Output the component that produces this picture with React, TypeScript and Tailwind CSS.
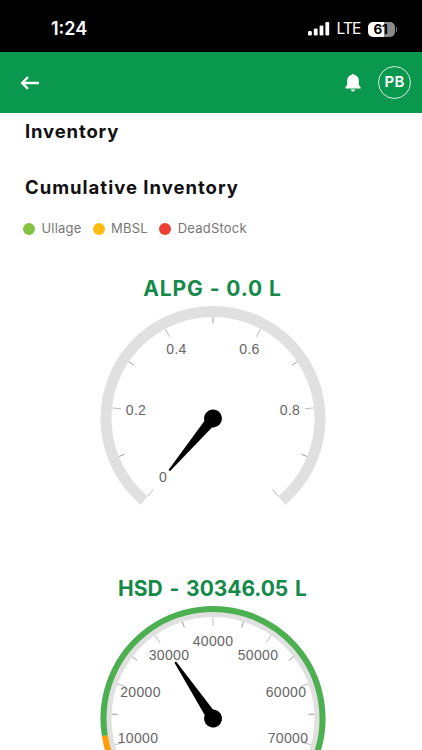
const CX = 113;
const CY = 113;
const START = 130;
const SWEEP = 280;

function polar(r: number, deg: number) {
    const rad = (deg * Math.PI) / 180;
    return { x: CX + r * Math.cos(rad), y: CY + r * Math.sin(rad) };
}

function arc(r: number, from: number, to: number) {
    const a = polar(r, from);
    const b = polar(r, to);
    return `M ${a.x} ${a.y} A ${r} ${r} 0 ${to - from > 180 ? 1 : 0} 1 ${b.x} ${b.y}`;
}

type Label = { text: string; x: number; y: number };
type Band = { from: number; to: number; color: string };

type GaugeProps = {
    title: string;
    titleClass: string;
    value: number;
    max: number;
    tickCount: number;
    labels: Label[];
    bands?: Band[];
};

function Gauge({ title, titleClass, value, max, tickCount, labels, bands = [] }: GaugeProps) {
    const needle = START + (value / max) * SWEEP;
    const ticks = Array.from({ length: tickCount + 1 }, (_, i) => i);

    return (
        <section className="flex h-[300px] shrink-0 flex-col items-center">
            <h3 className={`h-[30px] whitespace-nowrap pl-[3px] font-bold leading-[30px] text-[#15894a] ${titleClass}`}>{title}</h3>
            <svg width="226" height="226" viewBox="0 0 226 226" className="mt-[1px] ml-[3px] shrink-0 overflow-visible">
                <g transform="translate(0 0.500)">
                    <path d={arc(107, START, START + SWEEP)} fill="none" stroke="#e0e0e0" strokeWidth="11" />
                    {bands.map((b) => (
                        <path key={b.color} d={arc(109.5, b.from, b.to)} fill="none" stroke={b.color} strokeWidth="6" />
                    ))}
                    {ticks.map((i) => {
                        const deg = START + (i / tickCount) * SWEEP;
                        const major = i % 2 === 0;
                        const a = polar(101.5, deg);
                        const b = polar(major ? 92.5 : 95.5, deg);
                        return (
                            <line
                                key={i}
                                x1={a.x}
                                y1={a.y}
                                x2={b.x}
                                y2={b.y}
                                stroke={major ? "#bdbdbd" : "#9e9e9e"}
                                strokeWidth="1"
                            />
                        );
                    })}
                    <g transform={`translate(${CX} ${CY}) rotate(${needle})`}>
                        <path d="M0 -5.5 L67.5 -1 Q68.8 0 67.5 1 L0 5.5 Z" fill="#000" />
                        <circle r="9" fill="#000" />
                    </g>
                </g>
                {labels.map((l) => (
                    <text
                        key={l.text}
                        x={l.x}
                        y={l.y}
                        textAnchor="middle"
                        className="fill-[#666666] font-['Liberation_Sans',sans-serif] text-[14px] tracking-[0.3px]"
                    >
                        {l.text}
                    </text>
                ))}
            </svg>
        </section>
    );
}

const legend = [
    { name: "Ullage", dot: "bg-[#83c341]", gap: "mr-[11px]" },
    { name: "MBSL", dot: "bg-[#fbbc12]", gap: "mr-[11.5px]" },
    { name: "DeadStock", dot: "bg-[#ee4035]", gap: "" },
];

const alpgLabels: Label[] = [
    { text: "0", x: 63, y: 177 },
    { text: "0.2", x: 36, y: 110 },
    { text: "0.4", x: 76.5, y: 49 },
    { text: "0.6", x: 149.5, y: 49 },
    { text: "0.8", x: 190, y: 110 },
];

const hsdLabels: Label[] = [
    { text: "10000", x: 38, y: 138 },
    { text: "20000", x: 40.5, y: 92 },
    { text: "30000", x: 69, y: 55 },
    { text: "40000", x: 113, y: 41 },
    { text: "50000", x: 158, y: 55 },
    { text: "60000", x: 186, y: 92 },
    { text: "70000", x: 188, y: 138 },
];

function StatusBar() {
    return (
        <div className="flex h-[52px] shrink-0 items-center bg-black pt-[6px] pl-[51px] pr-[25px] text-white">
            <span className="text-[18px] font-semibold leading-none">1:24</span>
            <svg width="22" height="14" viewBox="0 0 22 14" className="ml-auto" fill="#fff">
                <rect x="0" y="9" width="3.8" height="4.5" rx="1.2" />
                <rect x="5.8" y="6.5" width="3.8" height="7" rx="1.2" />
                <rect x="11.6" y="3.5" width="3.8" height="10" rx="1.2" />
                <rect x="17.4" y="0" width="3.8" height="13.5" rx="1.2" />
            </svg>
            <span className="ml-[7px] text-[15.5px] leading-none tracking-[-0.9px]">LTE</span>
            <div className="ml-[7px] flex h-[15px] w-[27px] items-center justify-center rounded-[5px] bg-[linear-gradient(90deg,#fff_61%,#8a8a8a_61%)] pt-[1px] pr-[1px] text-[13.5px] font-bold leading-none tracking-[-0.3px] text-black">
                61
            </div>
            <div className="ml-[1px] h-[5px] w-[1.5px] rounded-r-full bg-[#777]" />
        </div>
    );
}

function Header() {
    return (
        <header className="flex h-[61px] shrink-0 items-center bg-[#0a984f] pl-[20px] pr-[11px]">
            <svg width="20" height="14" viewBox="0 0 20 14" fill="none" stroke="#fff" strokeWidth="2.4">
                <path d="M8 1.2 L2.2 7 L8 12.8 M2.2 7 H19" />
            </svg>
            <svg width="16" height="18" viewBox="0 0 16 18" fill="#fff" className="ml-auto">
                <path d="M8 0c.8 0 1.4.5 1.6 1.1C12.300 1.700 13.800 3.800 13.800 6.500v4.200c0 1.100 1.800 1.600 1.800 2.800v1H.4v-1c0-1.200 1.800-1.700 1.800-2.800V6.500c0-2.700 1.500-4.800 4.200-5.400C6.600.5 7.200 0 8 0z" />
                <path d="M5.9 15.6h4.200c0 1.300-.9 2-2.100 2s-2.100-.7-2.100-2z" />
            </svg>
            <div className="ml-[17px] flex size-[33px] items-center justify-center rounded-full border border-[#d5f3e2] text-[15px] font-semibold tracking-[0.3px] text-white">
                PB
            </div>
        </header>
    );
}

export default function App() {
    return (
        <div className="flex h-[750px] w-[422px] flex-col overflow-hidden bg-white font-['Inter',sans-serif]">
            <StatusBar />
            <Header />
            <main className="flex min-h-0 flex-1 flex-col overflow-hidden">
                <h1 className="mt-[6px] pl-[25px] text-[18.5px] font-bold leading-6 tracking-[0.85px] text-[#111]">Inventory</h1>
                <h2 className="mt-[32px] pl-[25px] text-[18.5px] font-bold leading-6 tracking-[1px] text-[#111]">
                    Cumulative Inventory
                </h2>
                <div className="mt-[20px] flex h-5 items-center pl-[23px]">
                    {legend.map((item) => (
                        <div key={item.name} className={`flex items-center ${item.gap}`}>
                            <span className={`size-[12px] rounded-full ${item.dot}`} />
                            <span className="ml-[6.5px] text-[13px] tracking-[0.2px] text-[#777]">{item.name}</span>
                        </div>
                    ))}
                </div>
                <div className="mt-[35px] flex flex-col">
                    <Gauge
                        title="ALPG - 0.0 L"
                        titleClass="text-[21px] tracking-[0.9px]"
                        value={0}
                        max={1}
                        tickCount={10}
                        labels={alpgLabels}
                    />
                    <Gauge
                        title="HSD - 30346.05 L"
                        titleClass="text-[21px] tracking-[-0.05px] [word-spacing:2px]"
                        value={30346.05}
                        max={80000}
                        tickCount={16}
                        labels={hsdLabels}
                        bands={[
                            { from: 130, to: 171, color: "#ff9f0a" },
                            { from: 171, to: 410, color: "#4caf50" },
                        ]}
                    />
                </div>
            </main>
        </div>
    );
}
